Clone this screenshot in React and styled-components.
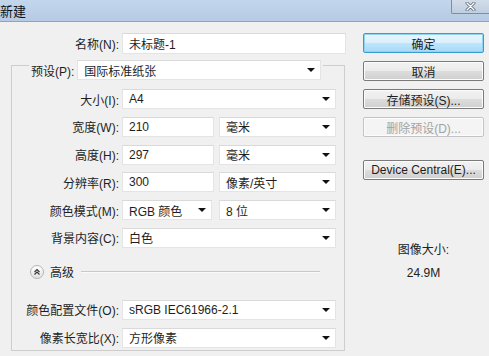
import React from 'react';
import styled, { createGlobalStyle } from 'styled-components';

const GlobalStyle = createGlobalStyle`
  html, body {
    margin: 0;
    padding: 0;
    background: #f0f0f0;
  }
  body {
    width: 489px;
    height: 356px;
    overflow: hidden;
    font-family: "Liberation Sans", "Noto Sans CJK SC", sans-serif;
    font-size: 12px;
    color: #1e1e1e;
  }
`;

const Window = styled.div`
  width: 489px;
  height: 356px;
  display: flex;
  flex-direction: column;
  background: #f0f0f0;
`;

const TitleBar = styled.div`
  height: 21px;
  border-bottom: 1px solid #8fa3bb;
  background: linear-gradient(#c2d6ec, #b6cbe3);
  display: flex;
  justify-content: space-between;
  align-items: flex-start;
`;

const Title = styled.div`
  font-family: "Noto Sans CJK SC", sans-serif;
  font-size: 13px;
  line-height: 21px;
  color: #111;
`;

const CloseBtn = styled.div`
  width: 38px;
  height: 14px;
  box-sizing: border-box;
  border: 1px solid #7d8ea4;
  border-top: none;
  border-right: none;
  border-bottom-left-radius: 2px;
  background: linear-gradient(#d3dde9, #bfcee0);
  display: flex;
  align-items: center;
  justify-content: center;
`;

const Main = styled.div`
  display: flex;
  gap: 17px;
  padding-top: 11px;
`;

const LeftCol = styled.div`
  width: 346px;
  display: flex;
  flex-direction: column;
`;

const RightCol = styled.div`
  width: 121px;
  display: flex;
  flex-direction: column;
  gap: 8px;
`;

const Row = styled.div`
  display: flex;
  align-items: center;
  gap: ${p => p.$gap ?? 3}px;
  height: ${p => p.$h || 20}px;
`;

const Label = styled.div`
  width: ${p => p.$w}px;
  text-align: right;
  white-space: nowrap;
  margin-right: ${p => p.$mr || 0}px;
`;

const Spacer = styled.div`
  width: ${p => p.$w}px;
`;

const Field = styled.div`
  width: ${p => p.$w}px;
  height: ${p => p.$h || 20}px;
  box-sizing: border-box;
  background: #fff;
  border: 1px solid #e4e4e4;
  border-top-color: #d9d9d9;
  display: flex;
  align-items: center;
  padding-left: 6px;
  white-space: nowrap;
`;

const Arrow = styled.span`
  margin-left: auto;
  margin-right: 5px;
  width: 0;
  height: 0;
  border-left: 4px solid transparent;
  border-right: 4px solid transparent;
  border-top: 4px solid #111;
`;

const Select = ({ w, children }) => (
  <Field $w={w}>
    {children}
    <Arrow />
  </Field>
);

const Group = styled.fieldset`
  margin: -3px 0 0 11px;
  padding: 0 8px 2px 0;
  width: 334px;
  box-sizing: border-box;
  border: 1px solid #cdcdcd;
  display: flex;
  flex-direction: column;
  gap: 8px;
`;

const Legend = styled.legend`
  margin-left: 17px;
  padding: 9px 2px 0 2px;
  display: flex;
  align-items: center;
  gap: 3px;
`;

const Inner = styled.div`
  display: flex;
  flex-direction: column;
  gap: 7.8px;
  padding-top: 9px;
`;

const Divider = styled.div`
  display: flex;
  align-items: center;
  height: 16px;
  margin: 8px 16px 12px 18px;
`;

const Toggle = styled.div`
  width: 12px;
  height: 12px;
  border-radius: 50%;
  border: 1px solid #b4b4b4;
  background: linear-gradient(#ffffff, #e2e2e2);
  display: flex;
  align-items: center;
  justify-content: center;
`;

const DividerText = styled.span`
  margin: 0 7px 0 6px;
`;

const Line = styled.div`
  flex: 1;
  height: 1px;
  background: #c9c9c9;
  border-bottom: 1px solid #fafafa;
`;

const Button = styled.div`
  height: 20px;
  box-sizing: border-box;
  border-radius: 2px;
  display: flex;
  align-items: center;
  justify-content: center;
  white-space: nowrap;
  border: 1px solid ${p => (p.$primary ? '#3a9bd0' : p.$disabled ? '#c2c4c6' : '#7a7a7a')};
  background: ${p =>
    p.$primary
      ? 'linear-gradient(#eaf6fd 0%, #d9f0fc 50%, #bee6fd 51%, #a7d9f5 100%)'
      : p.$disabled
      ? '#f4f4f4'
      : 'linear-gradient(#f2f2f2 0%, #ebebeb 50%, #dddddd 51%, #cfcfcf 100%)'};
  box-shadow: ${p => (p.$primary ? 'inset 0 0 0 1px #8fd3f5' : 'inset 0 0 0 1px #fcfcfc')};
  color: ${p => (p.$disabled ? '#a3a3a3' : '#1e1e1e')};
  margin-top: ${p => p.$mt || 0}px;
`;

const Info = styled.div`
  margin-top: 54px;
  display: flex;
  flex-direction: column;
  align-items: center;
  gap: 7px;
  line-height: 16px;
  color: #222;
`;

export default function App() {
  return (
    <Window>
      <GlobalStyle />
      <TitleBar>
        <Title>新建</Title>
        <CloseBtn>
          <svg width="11" height="9" viewBox="0 0 11 9">
            <path d="M2 1 L9 8 M9 1 L2 8" stroke="#5d6b7d" strokeWidth="3" strokeLinecap="round" />
            <path d="M2 1 L9 8 M9 1 L2 8" stroke="#ffffff" strokeWidth="1.4" strokeLinecap="round" />
          </svg>
        </CloseBtn>
      </TitleBar>
      <Main>
        <LeftCol>
          <Row $h={21}>
            <Label $w={119}>名称(N):</Label>
            <Field $w={224} $h={21}>未标题-1</Field>
          </Row>
          <Group>
            <Legend>
              <Label>预设(P):</Label>
              <Select w={244}>国际标准纸张</Select>
            </Legend>
            <Inner>
              <Row>
                <Label $w={107}>大小(I):</Label>
                <Select w={214}>A4</Select>
              </Row>
              <Row $gap={0}>
                <Label $w={107} $mr={3}>宽度(W):</Label>
                <Field $w={92}>210</Field>
                <Spacer $w={5} />
                <Select w={117}>毫米</Select>
              </Row>
              <Row $gap={0}>
                <Label $w={107} $mr={3}>高度(H):</Label>
                <Field $w={92}>297</Field>
                <Spacer $w={5} />
                <Select w={117}>毫米</Select>
              </Row>
              <Row $gap={0}>
                <Label $w={107} $mr={3}>分辨率(R):</Label>
                <Field $w={92}>300</Field>
                <Spacer $w={5} />
                <Select w={117}>像素/英寸</Select>
              </Row>
              <Row $gap={0}>
                <Label $w={107} $mr={3}>颜色模式(M):</Label>
                <Select w={90}>RGB 颜色</Select>
                <Spacer $w={7} />
                <Select w={117}>8 位</Select>
              </Row>
              <Row>
                <Label $w={107}>背景内容(C):</Label>
                <Select w={214}>白色</Select>
              </Row>
            </Inner>
            <Divider>
              <Toggle>
                <svg width="8" height="8" viewBox="0 0 8 8">
                  <path d="M1.5 4 L4 1.5 L6.5 4 M1.5 6.5 L4 4 L6.5 6.5" fill="none" stroke="#333" strokeWidth="1.1" />
                </svg>
              </Toggle>
              <DividerText>高级</DividerText>
              <Line />
            </Divider>
            <Row>
              <Label $w={107}>颜色配置文件(O):</Label>
              <Select w={214}>sRGB IEC61966-2.1</Select>
            </Row>
            <Row>
              <Label $w={107}>像素长宽比(X):</Label>
              <Select w={214}>方形像素</Select>
            </Row>
          </Group>
        </LeftCol>
        <RightCol>
          <Button $primary>确定</Button>
          <Button>取消</Button>
          <Button>存储预设(S)...</Button>
          <Button $disabled>删除预设(D)...</Button>
          <Button $mt={15}>Device Central(E)...</Button>
          <Info>
            <span>图像大小:</span>
            <span>24.9M</span>
          </Info>
        </RightCol>
      </Main>
    </Window>
  );
}
